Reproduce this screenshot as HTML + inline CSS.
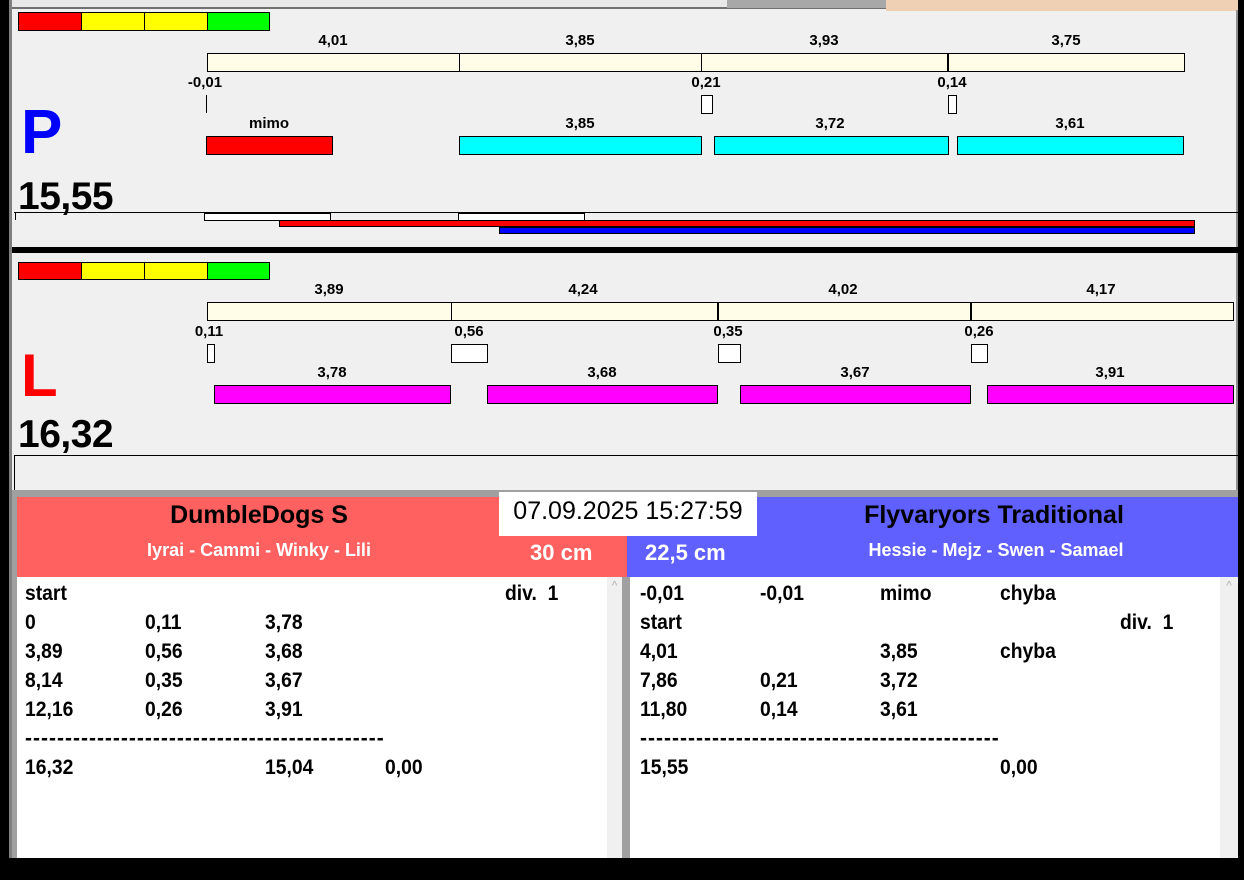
<!DOCTYPE html>
<html><head><meta charset="utf-8"><style>
*{margin:0;padding:0;box-sizing:border-box}
body{width:1244px;height:880px;position:relative;overflow:hidden;background:#f0f0f0;font-family:"Liberation Sans",Arial,sans-serif;font-weight:bold}
div{position:absolute}
.b{border:1px solid #000}
.l{font-size:15px;transform:translateX(-50%);white-space:nowrap;color:#000}
.cr{background:#ff0000}.cy{background:#ffff00}.cg{background:#00ff00}.cb{background:#fffde8}.cc{background:#00ffff}.cm{background:#ff00ff}.cw{background:#fff}
.t{font-size:21px;white-space:nowrap;transform:scaleX(0.92);transform-origin:left}
.d{font-size:21px;white-space:nowrap;letter-spacing:1px}
</style></head><body>
<div style="left:0;top:0;width:9px;height:880px;background:#000"></div>
<div style="left:9px;top:0;width:3px;height:880px;background:#808080"></div>
<div style="left:12px;top:0;width:874px;height:9px;background:#e8e8e8;border-bottom:2px solid #707070"></div>
<div style="left:727px;top:0;width:159px;height:8px;background:#a8a8a8"></div>
<div style="left:886px;top:0;width:352px;height:11px;background:#f0d0b4"></div>
<div style="left:1238px;top:0;width:6px;height:880px;background:#000"></div>
<div style="left:1236px;top:10px;width:2px;height:480px;background:#909090"></div>

<div class="b cr" style="left:18px;top:12px;width:64px;height:19px"></div>
<div class="b cy" style="left:81px;top:12px;width:64px;height:19px"></div>
<div class="b cy" style="left:144px;top:12px;width:64px;height:19px"></div>
<div class="b cg" style="left:207px;top:12px;width:63px;height:19px"></div>
<div class="l" style="left:333px;top:32px">4,01</div>
<div class="l" style="left:580px;top:32px">3,85</div>
<div class="l" style="left:824px;top:32px">3,93</div>
<div class="l" style="left:1066px;top:32px">3,75</div>
<div class="b cb" style="left:207px;top:53px;width:978px;height:19px"></div>
<div style="left:459px;top:53px;width:1px;height:19px;background:#000"></div>
<div style="left:701px;top:53px;width:1px;height:19px;background:#000"></div>
<div style="left:947px;top:53px;width:2px;height:19px;background:#000"></div>
<div class="l" style="left:205px;top:74px">-0,01</div>
<div class="l" style="left:706px;top:74px">0,21</div>
<div class="l" style="left:952px;top:74px">0,14</div>
<div style="left:206px;top:95px;width:1px;height:18px;background:#000"></div>
<div class="b cw" style="left:701px;top:95px;width:12px;height:19px"></div>
<div class="b cw" style="left:948px;top:95px;width:9px;height:19px"></div>
<div style="left:21px;top:98px;font-size:62px;color:#0000ff;line-height:70px">P</div>
<div class="l" style="left:269px;top:115px">mimo</div>
<div class="l" style="left:580px;top:115px">3,85</div>
<div class="l" style="left:830px;top:115px">3,72</div>
<div class="l" style="left:1070px;top:115px">3,61</div>
<div class="b cr" style="left:206px;top:136px;width:127px;height:19px"></div>
<div class="b cc" style="left:459px;top:136px;width:243px;height:19px"></div>
<div class="b cc" style="left:714px;top:136px;width:235px;height:19px"></div>
<div class="b cc" style="left:957px;top:136px;width:227px;height:19px"></div>
<div style="left:18px;top:174px;font-size:39px;line-height:46px;letter-spacing:-0.5px">15,55</div>
<div style="left:14px;top:212px;width:1224px;height:35px;border-top:1px solid #000"></div>
<div style="left:15px;top:212px;width:1px;height:8px;background:#000"></div>
<div class="b cw" style="left:204px;top:213px;width:127px;height:8px"></div>
<div class="b cw" style="left:458px;top:213px;width:127px;height:8px"></div>
<div class="b cr" style="left:279px;top:220px;width:916px;height:7px"></div>
<div class="b" style="left:499px;top:227px;width:696px;height:7px;background:#0000ff"></div>
<div style="left:12px;top:247px;width:1226px;height:6px;background:#000"></div>

<div class="b cr" style="left:18px;top:262px;width:64px;height:18px"></div>
<div class="b cy" style="left:81px;top:262px;width:64px;height:18px"></div>
<div class="b cy" style="left:144px;top:262px;width:64px;height:18px"></div>
<div class="b cg" style="left:207px;top:262px;width:63px;height:18px"></div>
<div class="l" style="left:329px;top:281px">3,89</div>
<div class="l" style="left:583px;top:281px">4,24</div>
<div class="l" style="left:843px;top:281px">4,02</div>
<div class="l" style="left:1101px;top:281px">4,17</div>
<div class="b cb" style="left:207px;top:302px;width:1027px;height:19px"></div>
<div style="left:451px;top:302px;width:1px;height:19px;background:#000"></div>
<div style="left:717px;top:302px;width:2px;height:19px;background:#000"></div>
<div style="left:970px;top:302px;width:2px;height:19px;background:#000"></div>
<div class="l" style="left:209px;top:323px">0,11</div>
<div class="l" style="left:469px;top:323px">0,56</div>
<div class="l" style="left:728px;top:323px">0,35</div>
<div class="l" style="left:979px;top:323px">0,26</div>
<div class="b cw" style="left:207px;top:344px;width:8px;height:19px"></div>
<div class="b cw" style="left:451px;top:344px;width:37px;height:19px"></div>
<div class="b cw" style="left:718px;top:344px;width:23px;height:19px"></div>
<div class="b cw" style="left:971px;top:344px;width:17px;height:19px"></div>
<div style="left:21px;top:342px;font-size:60px;color:#ff0000;line-height:68px">L</div>
<div class="l" style="left:332px;top:364px">3,78</div>
<div class="l" style="left:602px;top:364px">3,68</div>
<div class="l" style="left:855px;top:364px">3,67</div>
<div class="l" style="left:1110px;top:364px">3,91</div>
<div class="b cm" style="left:214px;top:385px;width:237px;height:19px"></div>
<div class="b cm" style="left:487px;top:385px;width:231px;height:19px"></div>
<div class="b cm" style="left:740px;top:385px;width:231px;height:19px"></div>
<div class="b cm" style="left:987px;top:385px;width:247px;height:19px"></div>
<div style="left:18px;top:412px;font-size:39px;line-height:46px;letter-spacing:-0.5px">16,32</div>
<div style="left:14px;top:455px;width:1224px;height:36px;border-top:1px solid #000;border-left:1px solid #000"></div>

<div style="left:12px;top:490px;width:1226px;height:7px;background:#a0a0a0"></div>

<div style="left:17px;top:497px;width:610px;height:80px;background:#ff6060"></div>
<div style="left:627px;top:497px;width:611px;height:80px;background:#6060ff"></div>
<div style="left:12px;top:497px;width:5px;height:361px;background:#a0a0a0"></div>
<div style="left:499px;top:492px;width:258px;height:44px;background:#fff;font-weight:normal;font-size:25px;line-height:38px;text-align:center">07.09.2025 15:27:59</div>
<div class="l" style="left:259px;top:501px;font-size:25px">DumbleDogs S</div>
<div class="l" style="left:259px;top:540px;font-size:18px;color:#fff">Iyrai - Cammi - Winky - Lili</div>
<div style="left:530px;top:540px;font-size:22px;color:#fff">30 cm</div>
<div style="left:645px;top:540px;font-size:22px;color:#fff">22,5 cm</div>
<div class="l" style="left:994px;top:501px;font-size:25px">Flyvaryors Traditional</div>
<div class="l" style="left:996px;top:540px;font-size:18px;color:#fff">Hessie - Mejz - Swen - Samael</div>

<div style="left:17px;top:577px;width:590px;height:281px;background:#fff"></div>
<div style="left:607px;top:577px;width:15px;height:281px;background:#f0f0f0;color:#bbb;font-size:10px;text-align:center;line-height:18px">^</div>
<div style="left:622px;top:577px;width:8px;height:281px;background:#a0a0a0"></div>
<div style="left:630px;top:577px;width:590px;height:281px;background:#fff"></div>
<div style="left:1220px;top:577px;width:18px;height:281px;background:#f0f0f0;color:#bbb;font-size:10px;text-align:center;line-height:18px">^</div>

<div class="t" style="left:25px;top:582px">start</div><div class="t" style="left:505px;top:582px">div.&nbsp; 1</div>
<div class="t" style="left:25px;top:611px">0</div><div class="t" style="left:145px;top:611px">0,11</div><div class="t" style="left:265px;top:611px">3,78</div>
<div class="t" style="left:25px;top:640px">3,89</div><div class="t" style="left:145px;top:640px">0,56</div><div class="t" style="left:265px;top:640px">3,68</div>
<div class="t" style="left:25px;top:669px">8,14</div><div class="t" style="left:145px;top:669px">0,35</div><div class="t" style="left:265px;top:669px">3,67</div>
<div class="t" style="left:25px;top:698px">12,16</div><div class="t" style="left:145px;top:698px">0,26</div><div class="t" style="left:265px;top:698px">3,91</div>
<div class="d" style="left:25px;top:727px">---------------------------------------------</div>
<div class="t" style="left:25px;top:756px">16,32</div><div class="t" style="left:265px;top:756px">15,04</div><div class="t" style="left:385px;top:756px">0,00</div>

<div class="t" style="left:640px;top:582px">-0,01</div><div class="t" style="left:760px;top:582px">-0,01</div><div class="t" style="left:880px;top:582px">mimo</div><div class="t" style="left:1000px;top:582px">chyba</div>
<div class="t" style="left:640px;top:611px">start</div><div class="t" style="left:1120px;top:611px">div.&nbsp; 1</div>
<div class="t" style="left:640px;top:640px">4,01</div><div class="t" style="left:880px;top:640px">3,85</div><div class="t" style="left:1000px;top:640px">chyba</div>
<div class="t" style="left:640px;top:669px">7,86</div><div class="t" style="left:760px;top:669px">0,21</div><div class="t" style="left:880px;top:669px">3,72</div>
<div class="t" style="left:640px;top:698px">11,80</div><div class="t" style="left:760px;top:698px">0,14</div><div class="t" style="left:880px;top:698px">3,61</div>
<div class="d" style="left:640px;top:727px">---------------------------------------------</div>
<div class="t" style="left:640px;top:756px">15,55</div><div class="t" style="left:1000px;top:756px">0,00</div>

<div style="left:0;top:858px;width:1244px;height:22px;background:#000"></div>
</body></html>
